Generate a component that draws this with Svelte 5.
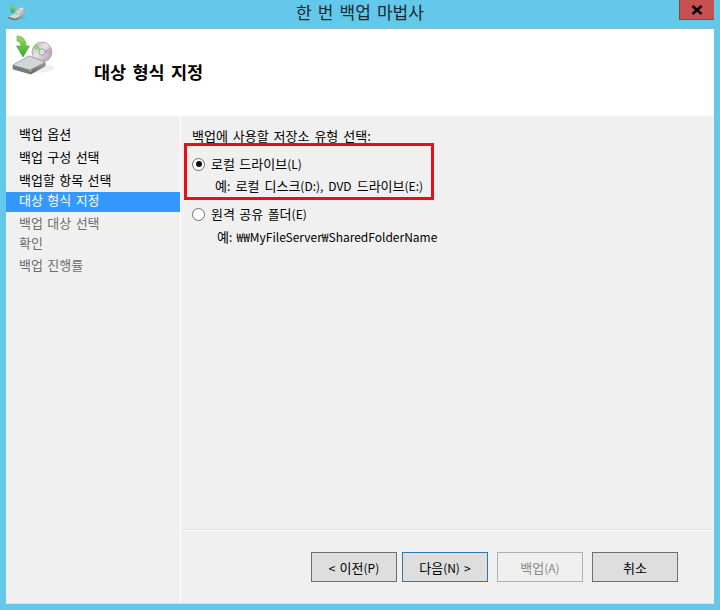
<script lang="ts">
  const steps = [
    { label: '백업 옵션', state: 'done', top: 0 },
    { label: '백업 구성 선택', state: 'done', top: 3 },
    { label: '백업할 항목 선택', state: 'done', top: 3 },
    { label: '대상 형식 지정', state: 'current', top: 1 },
    { label: '백업 대상 선택', state: 'todo', top: 2 },
    { label: '확인', state: 'todo', top: 0 },
    { label: '백업 진행률', state: 'todo', top: 2 },
  ];

  const buttons = [
    { label: '이전', before: '< ', after: '(P)', kind: '' },
    { label: '다음', before: '', after: '(N) >', kind: 'default' },
    { label: '백업', before: '', after: '(A)', kind: 'disabled' },
    { label: '취소', before: '', after: '', kind: '' },
  ];
</script>

<svg class="defs" width="0" height="0" aria-hidden="true">
  <defs>
    <linearGradient id="body" x1="0" y1="0" x2="0" y2="1">
      <stop offset="0" stop-color="#c9cdcd" />
      <stop offset="1" stop-color="#5c6063" />
    </linearGradient>
    <linearGradient id="disc" x1="0" y1="0" x2="1" y2="1">
      <stop offset="0" stop-color="#b0b0b0" />
      <stop offset="0.45" stop-color="#e6e6e6" />
      <stop offset="0.75" stop-color="#c6b4c4" />
      <stop offset="1" stop-color="#969696" />
    </linearGradient>
    <linearGradient id="arrow" x1="0" y1="0" x2="0" y2="1">
      <stop offset="0" stop-color="#a5dd58" />
      <stop offset="1" stop-color="#2fa82c" />
    </linearGradient>
    <symbol id="backup-icon" viewBox="0 0 44 42">
      <ellipse cx="24" cy="33" rx="18" ry="5" fill="#000" opacity="0.06" />
      <circle cx="30" cy="17" r="10" fill="url(#disc)" stroke="#8f8f8f" stroke-width="0.6" />
      <path d="M30 17 L38.5 12 A10 10 0 0 1 39.5 20 Z" fill="#c39fc0" opacity="0.7" />
      <path d="M30 17 L21 13 A10 10 0 0 1 25 8.5 Z" fill="#8fcb73" opacity="0.85" />
      <circle cx="30" cy="17" r="3.2" fill="#e8e8e8" stroke="#808080" stroke-width="0.7" />
      <circle cx="30" cy="17" r="1.1" fill="#fff" stroke="#999" stroke-width="0.4" />
      <path d="M1 30 L17 21 L33 27 L33 31 L19 39 L1 34 Z" fill="url(#body)" stroke="#64686b" stroke-width="0.6" />
      <path d="M1 30 L17 21 L33 27 L18 35 Z" fill="#d3d6d6" stroke="#909496" stroke-width="0.4" />
      <path d="M1 30.5 L18 35.5 L18 39 L1 34 Z" fill="#777b7e" />
      <rect x="17.5" y="34" width="2" height="3" fill="#5fd048" />
      <path d="M5 1 C10 1 14 4 14 11 L17.5 11 L11 22 L4.5 11 L9 11 C9 8 7.5 6 5 6 Z" fill="url(#arrow)" stroke="#2d9a2b" stroke-width="0.5" />
    </symbol>
  </defs>
</svg>

<div class="window">
  <header class="titlebar">
    <svg class="app-icon" width="18" height="18"><use href="#backup-icon" /></svg>
    <span class="title">한 번 백업 마법사</span>
    <button class="close" type="button" aria-label="닫기">
      <svg width="12" height="10" viewBox="0 0 12 10">
        <path d="M1.5 1 L10.5 9 M10.5 1 L1.5 9" stroke="#000" stroke-width="2.6" />
      </svg>
    </button>
  </header>

  <div class="client">
    <div class="page-head">
      <svg class="head-icon" width="44" height="42"><use href="#backup-icon" /></svg>
      <h1>대상 형식 지정</h1>
    </div>

    <div class="body">
      <nav class="steps">
        {#each steps as step}
          <div class="step {step.state}" style="margin-top: {step.top}px">{step.label}</div>
        {/each}
      </nav>

      <main class="pane">
        <div class="options">
          <p class="prompt">백업에 사용할 저장소 유형 선택:</p>

          <div class="highlight">
            <label class="option">
              <span class="radio checked"></span>
              <span>로컬 드라이브<span class="latin">(L)</span></span>
            </label>
            <p class="hint">예<span class="latin">:</span> 로컬 디스크<span class="latin">(D:), DVD</span> 드라이브<span class="latin">(E:)</span></p>
          </div>

          <label class="option second">
            <span class="radio"></span>
            <span>원격 공유 폴더<span class="latin">(E)</span></span>
          </label>
          <p class="hint second-hint">예<span class="latin">: ₩₩MyFileServer₩SharedFolderName</span></p>
        </div>

        <footer class="actions">
          {#each buttons as button}
            <button class="btn {button.kind}" type="button"><span class="latin">{button.before}</span>{button.label}<span class="latin">{button.after}</span></button>
          {/each}
        </footer>
      </main>
    </div>
  </div>
</div>

<style>
  :global(body) {
    margin: 0;
    overflow: hidden;
  }

  .defs {
    position: absolute;
  }

  .window {
    width: 720px;
    height: 610px;
    box-sizing: border-box;
    padding: 0 6px 6px;
    display: flex;
    flex-direction: column;
    background: #63c8ea;
    font-family: "Noto Sans CJK KR", "Liberation Sans", sans-serif;
    font-size: 13px;
    word-spacing: 1.5px;
    color: #000;
  }

  .latin {
    font-size: 12px;
  }

  .titlebar {
    height: 28px;
    flex: none;
    display: flex;
    align-items: flex-start;
    position: relative;
  }

  .app-icon {
    margin: 4px 0 0 2px;
  }

  .title {
    position: absolute;
    left: 290px;
    top: 1px;
    font-size: 17px;
    line-height: 22px;
    word-spacing: 2.3px;
    color: #1a2a30;
  }

  .close {
    margin-left: auto;
    width: 35px;
    height: 20px;
    padding: 0;
    display: flex;
    align-items: center;
    justify-content: center;
    background: #c75050;
    border: none;
    border-bottom: 1px solid #8e3f3f;
    border-left: 1px solid #8e3f3f;
    box-sizing: border-box;
  }

  .client {
    flex: 1;
    display: flex;
    flex-direction: column;
    min-height: 0;
    border-top: 1px solid #8fb9c9;
    border-bottom: 1px solid #d6e2e6;
  }

  .page-head {
    height: 87px;
    flex: none;
    display: flex;
    background: #fff;
    position: relative;
  }

  .head-icon {
    margin: 6px 0 0 6px;
  }

  h1 {
    margin: 31px 0 0 38px;
    font-size: 17.5px;
    line-height: 24px;
    font-weight: 700;
    word-spacing: 2.3px;
  }

  .body {
    flex: 1;
    display: flex;
    min-height: 0;
    background: #f0f0f0;
  }

  .steps {
    width: 174px;
    flex: none;
    padding-top: 9px;
    border-right: 1px solid #fff;
  }

  .step {
    height: 20px;
    padding-left: 13px;
    line-height: 18px;
  }

  .step.current {
    line-height: 16px;
    background: #3399ff;
    color: #fff;
  }

  .step.todo {
    color: #6d6d6d;
  }

  .pane {
    flex: 1;
    display: flex;
    flex-direction: column;
    min-width: 0;
  }

  .options {
    flex: 1;
    padding: 11px 0 0 11px;
  }

  p {
    margin: 0;
  }

  .prompt {
    line-height: 18px;
    word-spacing: 2px;
  }

  .highlight {
    width: 244px;
    height: 51px;
    margin: -2px 0 0 -8px;
    border: 3px solid #e5101c;
  }

  .option {
    display: flex;
    align-items: center;
    gap: 6px;
    height: 18px;
    line-height: 18px;
  }

  .highlight .option {
    margin: 9px 0 0 5px;
  }

  .radio {
    width: 11px;
    height: 11px;
    flex: none;
    border: 1px solid #6e6e6e;
    border-radius: 50%;
    background: #fff;
    position: relative;
  }

  .radio.checked::after {
    content: "";
    position: absolute;
    left: 2.5px;
    top: 2.5px;
    width: 6px;
    height: 6px;
    border-radius: 50%;
    background: #111;
  }

  .hint {
    line-height: 18px;
  }

  .highlight .hint {
    margin: 4px 0 0 28px;
    word-spacing: 2.2px;
  }

  .second {
    margin: 5px 0 0 0;
  }

  .second-hint {
    margin: 5px 0 0 25px;
  }

  .actions {
    height: 74px;
    flex: none;
    box-sizing: border-box;
    border-top: 1px solid #e2e2e2;
    box-shadow: inset 0 1px 0 #fff;
    padding: 22px 36px 0 0;
    display: flex;
    justify-content: flex-end;
    gap: 5px;
  }

  .btn {
    width: 86px;
    height: 30px;
    padding: 0;
    font: inherit;
    word-spacing: 1.5px;
    color: #000;
    background: #dedede;
    border: 1px solid #6f6f6f;
  }

  .btn.default {
    border-color: #2f78ab;
  }

  .btn.disabled {
    background: #efefef;
    border-color: #b0b0b0;
    color: #8a8a8a;
    margin-left: 4px;
  }

  .btn:last-child {
    margin-left: 4px;
  }
</style>
